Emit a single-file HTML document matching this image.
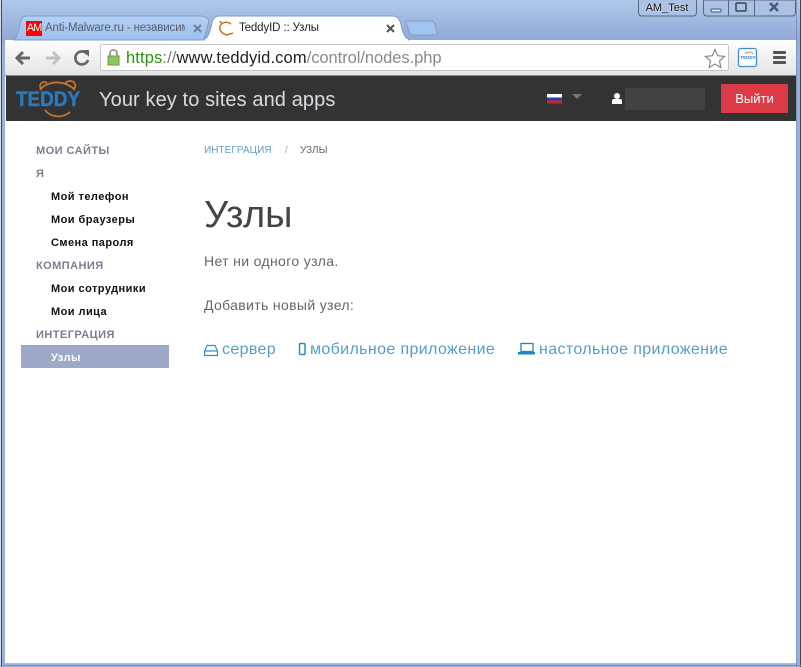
<!DOCTYPE html>
<html><head><meta charset="utf-8"><style>
html,body{margin:0;padding:0;width:801px;height:667px;overflow:hidden;background:#fff}
body{position:relative;font-family:"Liberation Sans","Noto Sans CJK SC",sans-serif}
.a{position:absolute;white-space:nowrap}
.h{font-weight:bold;font-size:11px;color:#7d7d92;left:36px;letter-spacing:.45px;line-height:14px}
.i{font-weight:bold;font-size:11px;color:#111;left:51px;letter-spacing:.45px;line-height:14px}
.l{color:#559dc8;font-size:16px;line-height:20px;top:340px}
.t{color:#666;font-size:14px;line-height:18px;left:204px;letter-spacing:.35px}
</style></head><body>
<svg class="a" style="left:0;top:0" width="801" height="667">
<defs>
<linearGradient id="fr" x1="0" y1="0" x2="0" y2="1"><stop offset="0" stop-color="#b0c8e8"/><stop offset="1" stop-color="#8ea8d6"/></linearGradient>
<linearGradient id="tb" x1="0" y1="0" x2="0" y2="1"><stop offset="0" stop-color="#fff"/><stop offset="1" stop-color="#e4e4e4"/></linearGradient>
<linearGradient id="t1" x1="0" y1="0" x2="0" y2="1"><stop offset="0" stop-color="#b4d0f4"/><stop offset="1" stop-color="#9dbfee"/></linearGradient>
</defs>
<rect width="801" height="667" fill="#97b0dc"/>
<rect width="801" height="42" fill="url(#fr)"/>
<rect x="1" y="0" width="1" height="667" fill="#40495c"/>
<rect x="0" y="0" width="1" height="667" fill="#d8dfea"/>
<rect x="796" y="0" width="1" height="667" fill="#7f93bb"/>
<rect x="800" y="0" width="1" height="667" fill="#3b4558"/>
<rect x="0" y="665" width="801" height="1" fill="#7b90bb"/>
<!-- content area -->
<rect x="5" y="40" width="791" height="624" fill="#fff"/>
<rect x="5" y="663" width="791" height="1" fill="#bcbcbc"/>
<rect x="5" y="40" width="791" height="35" fill="url(#tb)"/>
<rect x="5" y="75" width="791" height="1" fill="#8a8a8a"/>
<rect x="6" y="76" width="790" height="45" fill="#333"/>
<!-- inactive tab -->
<path d="M13 40 C17 38 19 32 20 23 C21 18 23 16 28 16 L200 16 C205 16 208 18 209 21 L204 40 Z" fill="url(#t1)" stroke="#7f9cc9" stroke-width="1"/>
<!-- active tab -->
<path d="M204 40 C208 38 210 32 212 23 C213 18 215 16 220 16 L392 16 C397 16 399 18 401 24 C402 32 405 38 409 40 Z" fill="#fff" stroke="#7f9cc9" stroke-width="1"/>
<rect x="205" y="39" width="203" height="2" fill="#fff"/>
<!-- new tab -->
<path d="M406 21 L431 21 C433 21 434 22 435 24 L437 33 C437 35 436 35 435 35 L413 35 C411 35 410 34 410 33 L406 23 Z" fill="#a2c4f0" stroke="#7f9cc9" stroke-width="1"/>
<!-- favicon AM -->
<rect x="26" y="21" width="16" height="15" fill="#f00"/>
<!-- teddy favicon -->
<path d="M231 24 C227 21 222 22 220 26 C219 30 222 34 227 35 L233 33 M222 24 L220 21" fill="none" stroke="#c8762a" stroke-width="1.500"/>
<!-- tab closes -->
<path d="M194 25 L201 32 M201 25 L194 32" stroke="#6f7f96" stroke-width="2"/>
<path d="M387 25 L394 32 M394 25 L387 32" stroke="#555" stroke-width="2"/>
<!-- back -->
<path d="M30 58 L17 58 M23 52 L17 58 L23 64" fill="none" stroke="#666" stroke-width="3"/>
<path d="M46 58 L59 58 M53 52 L59 58 L53 64" fill="none" stroke="#c2c2c2" stroke-width="3"/>
<path d="M87 54 A6.500 6.500 0 1 0 88 60" fill="none" stroke="#666" stroke-width="2.600"/>
<path d="M83 50 L89 50 L89 57 Z" fill="#666"/>
<!-- omnibox -->
<rect x="100.500" y="44.500" width="628" height="26" rx="2" fill="#fff" stroke="#c4c4c4"/>
<!-- lock -->
<rect x="108" y="56" width="11" height="9" fill="#8cc75b" stroke="#6a9c40"/>
<path d="M110 56 V53 C110 49 117 49 117 53 V56" fill="none" stroke="#888" stroke-width="1.600"/>
<!-- star -->
<path d="M715 49.500 L717.800 55.700 L724.500 56.400 L719.500 60.900 L720.900 67.500 L715 64.100 L709.100 67.500 L710.500 60.900 L705.500 56.400 L712.200 55.700 Z" fill="#fff" stroke="#8a8a8a" stroke-width="1.200"/>
<!-- ext icon -->
<rect x="738.500" y="48.500" width="18" height="18" rx="2" fill="#fff" stroke="#3e8fd6" stroke-width="1.300"/>
<path d="M745 54 C748 51 752 52 753 54" fill="none" stroke="#d88a3d"/>
<!-- menu -->
<rect x="773" y="51" width="13" height="3" rx="1" fill="#555"/>
<rect x="773" y="56" width="13" height="3" rx="1" fill="#555"/>
<rect x="773" y="61" width="13" height="3" rx="1" fill="#555"/>
<!-- window buttons -->
<path d="M638.500 0 V12 Q638.500 16 642 16 H693 Q696.500 16 696.500 12 V0" fill="#a9c1e3" stroke="#56687f"/>
<path d="M703.500 0 V12 Q703.500 16 707 16 H792 Q795.500 16 795.500 12 V0 Z" fill="#a9c1e3" stroke="#56687f"/>
<path d="M728.500 0 V16 M754.500 0 V16" stroke="#56687f"/>
<rect x="711" y="9" width="10" height="3" rx="1" fill="#dfe8f4" stroke="#4a5a70"/>
<rect x="736" y="3" width="10" height="8" rx="1" fill="none" stroke="#38465a" stroke-width="1.500"/>
<path d="M770 3 L778 11 M778 3 L770 11" stroke="#4a5a70" stroke-width="2.400"/>
<!-- teddy logo -->
<path d="M40 90 C44 84 54 81 62 83 C68 84 72 87 75 90 M41 89 C38 84 43 80 47 83 M65 84 C67 80 73 80 75 84 C76 86 75 88 73 89 M45 110 C50 117 62 119 70 112" fill="none" stroke="#c8772b" stroke-width="1.800"/>
<!-- flag -->
<rect x="547" y="94" width="15" height="3.500" fill="#fff"/>
<rect x="547" y="97.500" width="15" height="3.500" fill="#2b3f9e"/>
<rect x="547" y="100.500" width="15" height="3" fill="#c8282c"/>
<path d="M572 94 H582 L577 99 Z" fill="#777"/>
<!-- user -->
<circle cx="617" cy="96" r="3" fill="#fff"/>
<path d="M612 104 V101 Q612 99 614 99 H620 Q622 99 622 101 V104 Z" fill="#fff"/>
<rect x="625" y="88" width="80" height="22" fill="#434343"/>
<rect x="721" y="84" width="67" height="29" fill="#dc3a47"/>
<!-- sidebar active -->
<rect x="21" y="345" width="148" height="23" fill="#9da9c6"/>
<!-- link icons -->
<path d="M204.500 351 L207 345.500 H215 L217.500 351 V355.500 H204.500 Z M204.500 351 H217.500" fill="none" stroke="#3d8fbf" stroke-width="1.200"/>
<rect x="299.500" y="343.500" width="5.500" height="11" rx="1" fill="none" stroke="#2e8bbd" stroke-width="1.500"/>
<rect x="521" y="343.500" width="12" height="8" fill="none" stroke="#1f86b8" stroke-width="1.300"/>
<rect x="518" y="352" width="17" height="2.500" fill="#1f86b8"/>
</svg>
<div class="a" style="left:26px;top:21px;width:16px;font-size:11px;line-height:15px;color:#fff;letter-spacing:-1px;text-align:center">AM</div>
<div class="a" style="left:45px;top:21px;width:140px;overflow:hidden;font-size:11.500px;line-height:15px;color:#555e6e;letter-spacing:-.12px">Anti-Malware.ru - независим</div>
<div class="a" style="left:239px;top:21px;font-size:11.500px;line-height:15px;color:#222;letter-spacing:-.12px">TeddyID :: Узлы</div>
<div class="a" style="left:126px;top:48px;font-size:16.500px;line-height:20px;color:#8a8a8a;letter-spacing:.12px"><span style="color:#2f8f13">https</span><span style="color:#777">://</span><span style="color:#222">www.teddyid.com</span><span style="letter-spacing:-.05px">/control/nodes.php</span></div>
<div class="a" style="left:740px;top:55px;width:16px;text-align:center;font-size:4.500px;line-height:6px;font-weight:bold;color:#2a78c0">TEDDY</div>
<div class="a" style="left:638px;top:2px;width:58px;text-align:center;font-size:11px;line-height:13px;color:#111;text-shadow:0 0 2px #fff">AM_Test</div>
<div class="a" style="left:16px;top:88px;font-size:21px;line-height:24px;font-weight:bold;color:#2a78bd;-webkit-text-stroke:.5px #2a78bd;transform:scaleX(.9);transform-origin:left center">TEDDY</div>
<div class="a" style="left:99px;top:88px;font-size:20px;line-height:24px;color:#d8dce2;letter-spacing:.1px">Your key to sites and apps</div>
<div class="a" style="left:721px;top:84px;width:67px;text-align:center;font-size:13px;line-height:29px;color:#fff">Выйти</div>

<div class="a h" style="top:144px">МОИ САЙТЫ</div>
<div class="a h" style="top:167px">Я</div>
<div class="a i" style="top:190px">Мой телефон</div>
<div class="a i" style="top:213px">Мои браузеры</div>
<div class="a i" style="top:236px">Смена пароля</div>
<div class="a h" style="top:259px">КОМПАНИЯ</div>
<div class="a i" style="top:282px">Мои сотрудники</div>
<div class="a i" style="top:305px">Мои лица</div>
<div class="a h" style="top:328px">ИНТЕГРАЦИЯ</div>
<div class="a i" style="top:351px;color:#fff">Узлы</div>

<div class="a" style="left:204px;top:144px;font-size:10px;line-height:14px;color:#5c9fc6;letter-spacing:.05px">ИНТЕГРАЦИЯ</div>
<div class="a" style="left:285px;top:144px;font-size:10px;line-height:14px;color:#aaa">/</div>
<div class="a" style="left:300px;top:144px;font-size:10px;line-height:14px;color:#666">УЗЛЫ</div>
<div class="a" style="left:204px;top:193px;font-size:38px;line-height:44px;color:#444">Узлы</div>
<div class="a t" style="top:252px">Нет ни одного узла.</div>
<div class="a t" style="top:296px">Добавить новый узел:</div>
<div class="a l" style="left:222px;letter-spacing:.35px">сервер</div>
<div class="a l" style="left:310px;letter-spacing:.37px">мобильное приложение</div>
<div class="a l" style="left:539px;letter-spacing:.37px">настольное приложение</div>
</body></html>
